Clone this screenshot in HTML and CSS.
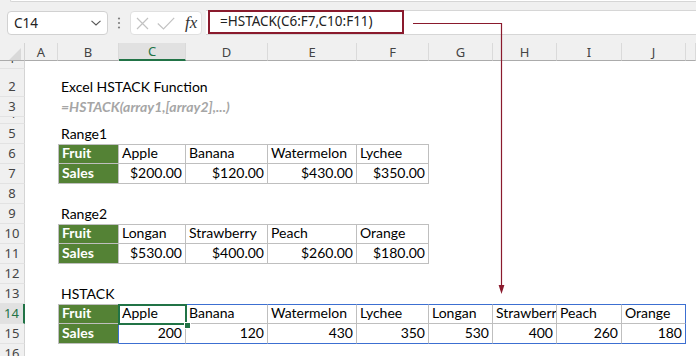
FILE: index.html
```html
<!DOCTYPE html>
<html>
<head>
<meta charset="utf-8">
<link rel="stylesheet" href="styles.css">
</head>
<body>
<div class="topbar">
  <div class="ribbon-edge"></div>
  <div class="fbar">
    <div class="namebox"><span>C14</span>
      <svg class="chev" width="10" height="6" viewBox="0 0 10 6"><path d="M0.5 0.8 L5 5 L9.5 0.8" fill="none" stroke="#555" stroke-width="1.1"/></svg>
    </div>
    <div class="grip"><svg width="4" height="12" viewBox="0 0 4 12"><circle cx="2" cy="1.5" r="1.1" fill="#808080"/><circle cx="2" cy="6" r="1.1" fill="#808080"/><circle cx="2" cy="10.5" r="1.1" fill="#808080"/></svg></div>
    <div class="fbtns">
      <svg width="13" height="13" viewBox="0 0 13 13"><path d="M1 1 L12 12 M12 1 L1 12" stroke="#c2c2c2" stroke-width="1.2" fill="none"/></svg>
      <svg width="18" height="13" viewBox="0 0 18 13"><path d="M0.8 6.5 L6.5 12 L17.2 0.8" stroke="#c2c2c2" stroke-width="1.2" fill="none"/></svg>
      <span class="fx">fx</span>
    </div>
    <div class="finput"><div class="fhl">=HSTACK(C6:F7,C10:F11)</div></div>
  </div>
</div>

<div class="sheet">
  <div class="corner"><div class="tri"></div></div>
  <div class="ch">A</div><div class="ch">B</div><div class="ch sel">C</div><div class="ch">D</div><div class="ch">E</div><div class="ch">F</div><div class="ch">G</div><div class="ch">H</div><div class="ch">I</div><div class="ch">J</div><div class="ch"></div>

  <div class="rh">1</div><i></i><i></i><i></i><i></i><i></i><i></i><i></i><i></i><i></i><i></i><i></i>

  <div class="rh">2</div><i></i><div class="c">Excel HSTACK Function</div><i></i><i></i><i></i><i></i><i></i><i></i><i></i><i></i><i></i>

  <div class="rh">3</div><i></i><div class="c syn">=HSTACK(array1,[array2],...)</div><i></i><i></i><i></i><i></i><i></i><i></i><i></i><i></i><i></i>

  <div class="rh">4</div><i></i><i></i><i></i><i></i><i></i><i></i><i></i><i></i><i></i><i></i><i></i>

  <div class="rh">5</div><i></i><div class="c">Range1</div><i></i><i></i><i></i><i></i><i></i><i></i><i></i><i></i><i></i>

  <div class="rh">6</div><i></i>
  <div class="c t top lf g">Fruit</div><div class="c t top">Apple</div><div class="c t top">Banana</div><div class="c t top">Watermelon</div><div class="c t top">Lychee</div>
  <i></i><i></i><i></i><i></i><i></i>

  <div class="rh">7</div><i></i>
  <div class="c t lf g">Sales</div><div class="c t r">$200.00</div><div class="c t r">$120.00</div><div class="c t r">$430.00</div><div class="c t r">$350.00</div>
  <i></i><i></i><i></i><i></i><i></i>

  <div class="rh">8</div><i></i><i></i><i></i><i></i><i></i><i></i><i></i><i></i><i></i><i></i><i></i>

  <div class="rh">9</div><i></i><div class="c">Range2</div><i></i><i></i><i></i><i></i><i></i><i></i><i></i><i></i><i></i>

  <div class="rh">10</div><i></i>
  <div class="c t top lf g">Fruit</div><div class="c t top">Longan</div><div class="c t top">Strawberry</div><div class="c t top">Peach</div><div class="c t top">Orange</div>
  <i></i><i></i><i></i><i></i><i></i>

  <div class="rh">11</div><i></i>
  <div class="c t lf g">Sales</div><div class="c t r">$530.00</div><div class="c t r">$400.00</div><div class="c t r">$260.00</div><div class="c t r">$180.00</div>
  <i></i><i></i><i></i><i></i><i></i>

  <div class="rh">12</div><i></i><i></i><i></i><i></i><i></i><i></i><i></i><i></i><i></i><i></i><i></i>

  <div class="rh">13</div><i></i><div class="c">HSTACK</div><i></i><i></i><i></i><i></i><i></i><i></i><i></i><i></i><i></i>

  <div class="rh sel">14</div><i></i>
  <div class="c t top lf g sb">Fruit</div>
  <div class="c t top bt active">Apple</div>
  <div class="c t top bt">Banana</div>
  <div class="c t top bt">Watermelon</div>
  <div class="c t top bt">Lychee</div>
  <div class="c t top bt">Longan</div>
  <div class="c t top bt">Strawberry</div>
  <div class="c t top bt">Peach</div>
  <div class="c t top bt sb">Orange</div>
  <i></i>

  <div class="rh">15</div><i></i>
  <div class="c t lf g sb">Sales</div>
  <div class="c t r bb">200</div>
  <div class="c t r bb">120</div>
  <div class="c t r bb">430</div>
  <div class="c t r bb">350</div>
  <div class="c t r bb">530</div>
  <div class="c t r bb">400</div>
  <div class="c t r bb">260</div>
  <div class="c t r bb sb">180</div>
  <i></i>

  <div class="rh">16</div><i></i><i></i><i></i><i></i><i></i><i></i><i></i><i></i><i></i><i></i><i></i>
</div>

<svg class="annot" width="696" height="356" viewBox="0 0 696 356">
  <path d="M413 23.5 H501.5 V287" fill="none" stroke="#8a1a2d" stroke-width="1.2"/>
  <polygon points="498.6,285 504.4,285 501.5,294" fill="#8a1a2d"/>
</svg>
</body>
</html>
```

FILE: styles.css
```css
* { box-sizing: border-box; margin: 0; padding: 0; }
html, body { width: 696px; height: 356px; overflow: hidden; background: #fff; }
body { position: relative; font-family: "Lato", "Liberation Sans", sans-serif; }

/* ---------- formula bar ---------- */
.topbar {
  height: 43px;
  background: #f0f0f0;
  display: flex;
  flex-direction: column;
}
.ribbon-edge {
  height: 2px;
  margin-left: 10px;
  background: #fff;
  border-bottom: 1px solid #d6d6d6;
  border-left: 1px solid #d6d6d6;
  border-bottom-left-radius: 3px;
}
.fbar {
  margin-top: 8px;
  height: 25px;
  display: flex;
  align-items: flex-start;
  font-family: "Noto Sans", "Open Sans", sans-serif;
}
.namebox {
  margin-left: 7px;
  margin-top: 1px;
  width: 101px;
  height: 24px;
  background: #fff;
  border: 1px solid #d1d1d1;
  border-radius: 4px;
  display: flex;
  align-items: center;
  justify-content: space-between;
  padding: 0 6px 0 6px;
  font-size: 13.5px;
  color: #222;
}
.grip {
  width: 22px;
  height: 25px;
  display: flex;
  align-items: center;
  justify-content: center;
}
.fbtns {
  margin-top: 1px;
  width: 72px;
  height: 24px;
  background: #fff;
  border: 1px solid #e0e0e0;
  border-radius: 4px;
  display: flex;
  align-items: center;
  padding-left: 5px;
  gap: 8px;
}
.fx {
  font-family: "Liberation Serif", serif;
  font-style: italic;
  font-size: 17px;
  color: #333;
  margin-left: 2px;
  line-height: 20px;
}
.finput {
  flex: 1;
  margin-left: 4px;
  height: 25px;
  background: #fff;
  border-top: 1px solid #d6d6d6;
  border-bottom: 1px solid #d6d6d6;
  padding-left: 2px;
}
.fhl {
  margin-top: -1px;
  width: 196px;
  height: 24px;
  border: 2px solid #8a1a2d;
  padding-left: 10px;
  font-size: 13.5px;
  line-height: 19px;
  color: #222;
  white-space: nowrap;
}

/* ---------- sheet grid ---------- */
.sheet {
  display: grid;
  grid-template-columns: 25px 33px 61px 67px 82px 89px 72px 64px 64px 65px 64px 10px;
  grid-template-rows: 18px 8px 28px 20px 7px repeat(12, 20px);
}
.sheet > i { display: block; }

.corner {
  background: #f0f0f0;
  border-right: 1px solid #d4d4d4;
  border-bottom: 1px solid #ababab;
  display: flex;
  align-items: flex-end;
  justify-content: flex-end;
  padding: 0 3px 0 0;
}
.tri {
  width: 12px;
  height: 12px;
  background: #d9d9d9;
  clip-path: polygon(100% 0, 100% 100%, 0 100%);
}
.ch {
  background: #f0f0f0;
  border-right: 1px solid #dadada;
  border-bottom: 1px solid #ababab;
  display: flex;
  align-items: center;
  justify-content: center;
  font-family: "Noto Sans", "Open Sans", sans-serif;
  font-size: 13px;
  color: #444;
}
.ch.sel {
  background: #e1e1e1;
  color: #217346;
  border-bottom: 2px solid #217346;
}
.rh {
  background: #f0f0f0;
  border-right: 1px solid #d4d4d4;
  border-bottom: 1px solid #e2e2e2;
  display: flex;
  align-items: flex-end;
  justify-content: center;
  overflow: hidden;
  font-family: "Noto Sans", "Open Sans", sans-serif;
  font-size: 13px;
  line-height: 20px;
  color: #444;
}
.rh.sel {
  background: #e1e1e1;
  color: #217346;
  border-right: 2px solid #217346;
}

.c {
  display: flex;
  align-items: flex-end;
  padding: 0 3px;
  font-size: 14px;
  line-height: 20px;
  white-space: nowrap;
  color: #000;
}
.c.r { justify-content: flex-end; }
.c.syn {
  color: #a6a6a6;
  font-weight: bold;
  font-style: italic;
}
.t {
  overflow: hidden;
  border-right: 1px solid #bfbfbf;
  border-bottom: 1px solid #bfbfbf;
}
.t.top { border-top: 1px solid #bfbfbf; }
.t.lf { border-left: 1px solid #bfbfbf; }
.g {
  background: #548235;
  color: #fff;
  font-weight: bold;
}
.t.bt { border-top-color: #3c6fd1; }
.t.bb { border-bottom-color: #3c6fd1; }
.t.sb { border-right-color: #3c6fd1; }

.active { position: relative; overflow: visible; }
.active::after {
  content: "";
  position: absolute;
  top: -1px;
  left: -1px;
  right: -2px;
  bottom: -2px;
  border: 2px solid #217346;
}
.active::before {
  content: "";
  position: absolute;
  right: -5px;
  bottom: -5px;
  width: 5px;
  height: 5px;
  background: #217346;
  outline: 1px solid #fff;
  z-index: 2;
}

.annot {
  position: absolute;
  left: 0;
  top: 0;
  pointer-events: none;
}
```
